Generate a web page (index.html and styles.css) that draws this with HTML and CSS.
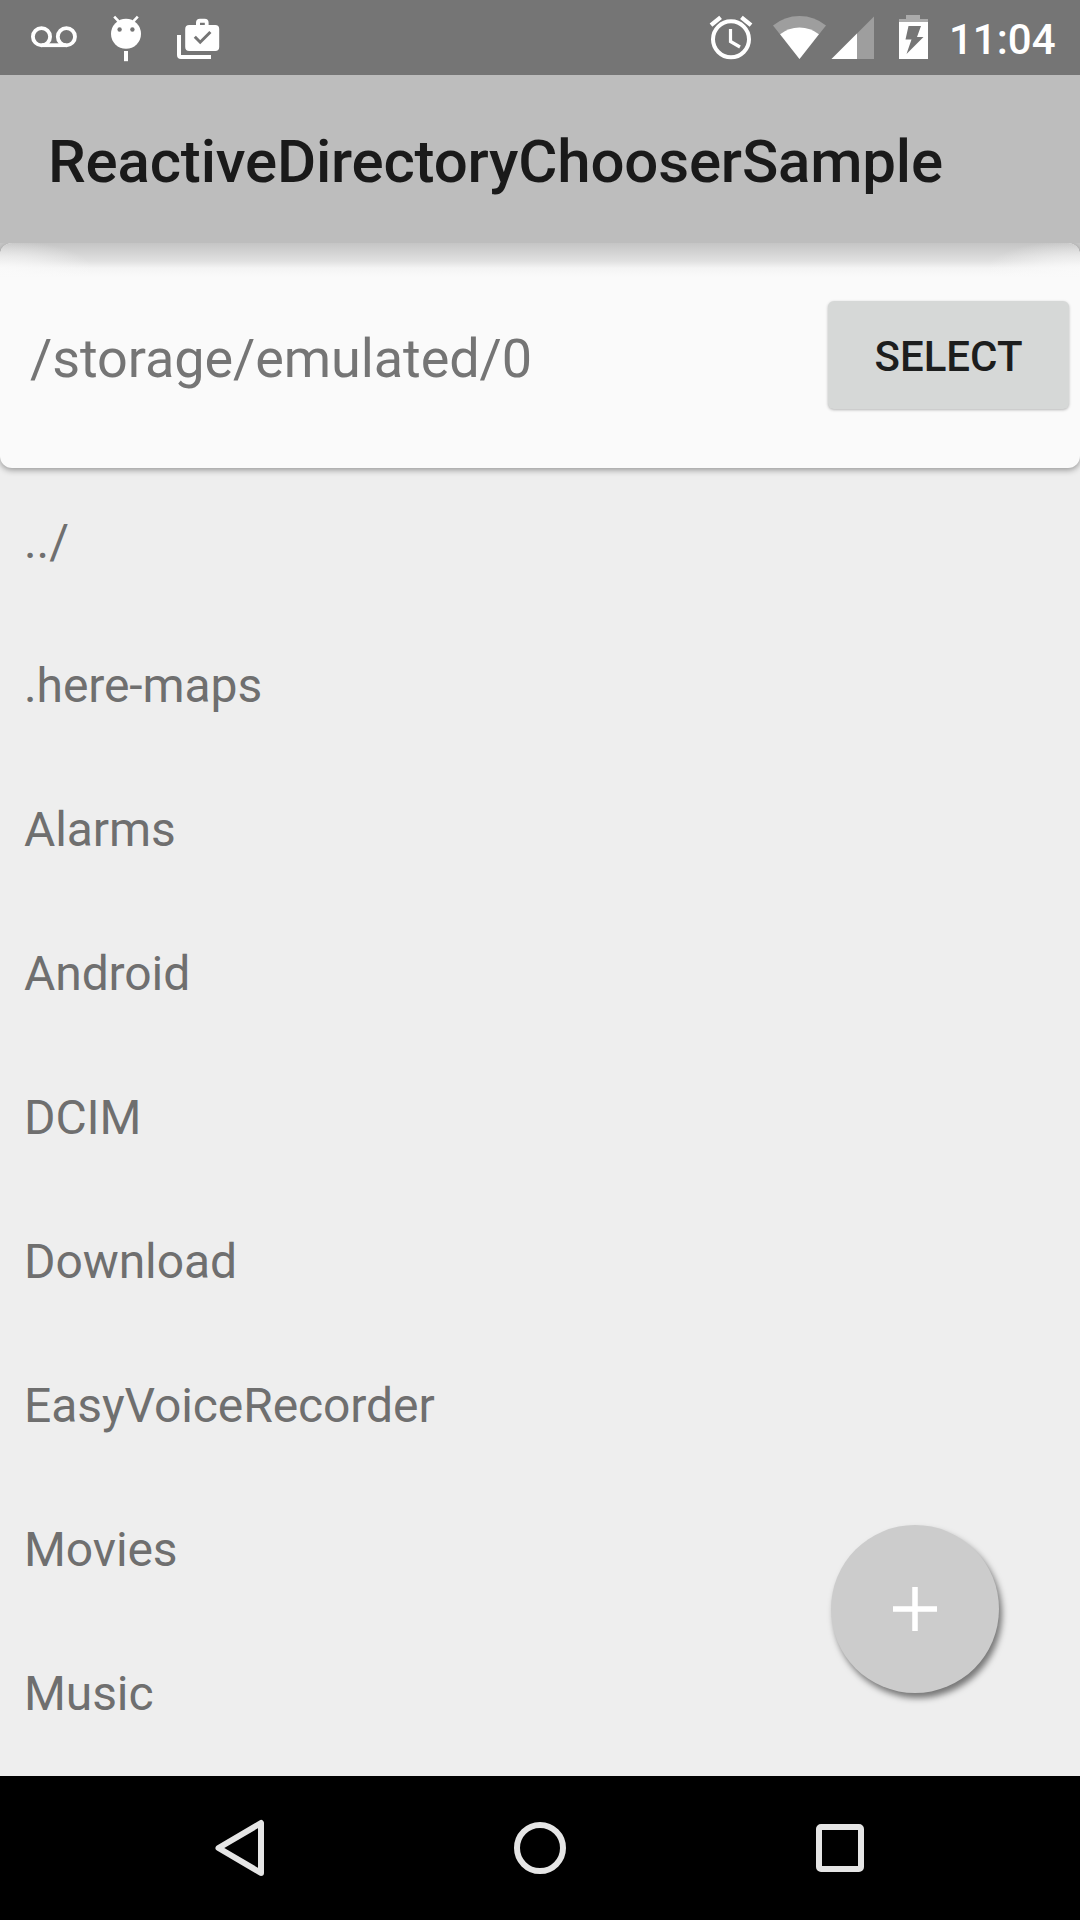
FILE: index.html
```html
<!DOCTYPE html>
<html lang="en">
<head>
<meta charset="utf-8">
<title>ReactiveDirectoryChooserSample</title>
<link rel="stylesheet" href="styles.css">
</head>
<body>
<div class="screen">
  <header class="status-bar">
    <svg class="notifications" viewBox="0 0 240 75" width="240" height="75">
      <g fill="none" stroke="#fff" stroke-width="3.8">
        <circle cx="41.5" cy="36.7" r="8.6"/>
        <circle cx="66.4" cy="36.7" r="8.6"/>
        <path d="M41.5 45.2H66.4"/>
      </g>
      <g fill="#fff">
        <circle cx="126" cy="33.8" r="15"/>
        <path d="M124 51h4v10.2h-4z"/>
        <path d="M114.2 16.6l4.5 4.8M137.8 16.6l-4.5 4.8" stroke="#fff" stroke-width="2.6"/>
      </g>
      <circle cx="119.6" cy="29.5" r="2.2" fill="#757575"/>
      <circle cx="132.4" cy="29.5" r="2.2" fill="#757575"/>
      <path fill="#fff" fill-rule="evenodd" d="M196 25v-2.200q0-4 4-4h4.600q4 0 4 4V25h6.600q4 0 4 4v18q0 4-4 4h-26q-4 0-4-4V29q0-4 4-4zM200 25h4.800v-2.200h-4.800z"/>
      <path fill="none" stroke="#757575" stroke-width="3" d="M194.800 36.800l5.400 5.400 10.200-10.200"/>
      <path fill="#fff" d="M177 35h4v20h30v4h-30q-4 0-4-4z"/>
    </svg>
    <div class="system">
      <svg viewBox="706 0 230 75" width="230" height="75">
        <circle cx="731" cy="39.300" r="18" fill="none" stroke="#fff" stroke-width="4"/>
        <path d="M730.500 29v12.500l9.500 5.500" fill="none" stroke="#fff" stroke-width="3.200"/>
        <path d="M711 25.200l9.600-7.800M751 25.200l-9.600-7.800" stroke="#fff" stroke-width="4.300"/>
        <path d="M799.500 59l-26.500-33.500Q784.500 16 799.500 16t26.500 9.500z" fill="#9e9e9e"/>
        <path d="M799.500 59l-19.400-24.700Q788.500 27.500 799.500 27.500t19.400 6.800z" fill="#fff"/>
        <path d="M831.500 59L874 16.500V59z" fill="#9e9e9e"/>
        <path d="M831.500 59L857 33.500V59z" fill="#fff"/>
        <path d="M899 22v-3h7v-4h14v4h8v3z" fill="#ababab"/>
        <path d="M899 22h29v37h-29z" fill="#fff"/>
        <path d="M908.500 26h12.500l-4 11h6.500l-17 17 5-14.500h-6z" fill="#757575"/>
      </svg>
      <span class="clock">11:04</span>
    </div>
  </header>
  <div class="app-bar"><h1 class="title">ReactiveDirectoryChooserSample</h1></div>
  <main class="content">
    <section class="path-card">
      <span class="path">/storage/emulated/0</span>
      <button class="select">SELECT</button>
    </section>
    <ul class="directories">
      <li>../</li>
      <li>.here-maps</li>
      <li>Alarms</li>
      <li>Android</li>
      <li>DCIM</li>
      <li>Download</li>
      <li>EasyVoiceRecorder</li>
      <li>Movies</li>
      <li>Music</li>
    </ul>
    <button class="fab" aria-label="New folder">
      <svg viewBox="0 0 44 44" width="44" height="44"><path d="M22 0v44M0 22h44" stroke="#fff" stroke-width="5.500"/></svg>
    </button>
  </main>
  <nav class="nav-bar">
    <svg viewBox="0 0 60 60" width="60" height="60"><path d="M8.500 30L51 5v50z"/></svg>
    <svg viewBox="0 0 60 60" width="60" height="60"><circle cx="30" cy="30" r="23"/></svg>
    <svg viewBox="0 0 60 60" width="60" height="60"><rect x="9" y="9" width="42" height="42" rx="2"/></svg>
  </nav>
</div>
</body>
</html>
```
FILE: styles.css
```css
* {
  box-sizing: border-box;
}

body {
  margin: 0;
  font-family: Roboto, sans-serif;
}

.screen {
  display: flex;
  flex-direction: column;
  width: 1080px;
  height: 1920px;
  overflow: hidden;
  background: #eee;
}

.status-bar {
  display: flex;
  flex: none;
  justify-content: space-between;
  height: 75px;
  background: #757575;
}

.status-bar svg {
  display: block;
}

.system {
  display: flex;
  width: 374px;
}

.clock {
  padding: 2px 0 0 13px;
  color: #fff;
  font-size: 42px;
  font-weight: 500;
  line-height: 75px;
}

.app-bar {
  position: relative;
  z-index: 1;
  display: flex;
  flex: none;
  align-items: center;
  height: 168px;
  padding: 5px 48px 0;
  background: #bdbdbd;
}

.title {
  margin: 0;
  color: #1a1a1a;
  font-size: 60px;
  font-weight: 500;
  letter-spacing: -0.18px;
  line-height: 70px;
}

.content {
  position: relative;
  flex: 1;
  min-height: 0;
  background: linear-gradient(#c8c8c8 12px, #eee 12px);
}

.path-card {
  position: relative;
  display: flex;
  align-items: center;
  justify-content: space-between;
  height: 225px;
  padding: 0 11px 0 30px;
  border-radius: 12px;
  background: #fafafa;
  box-shadow: 0 2px 6px rgba(0, 0, 0, 0.38);
}

/* Shadow that the app bar casts on the card */
.path-card::before {
  content: "";
  position: absolute;
  inset: 0 0 auto;
  height: 36px;
  border-radius: 12px 12px 0 0;
  background:
    radial-gradient(ellipse 95px 32px at 0 80%, rgba(250, 250, 250, 0.9), rgba(250, 250, 250, 0.5) 50%, rgba(250, 250, 250, 0)),
    radial-gradient(ellipse 95px 32px at 100% 80%, rgba(250, 250, 250, 0.9), rgba(250, 250, 250, 0.5) 50%, rgba(250, 250, 250, 0)),
    linear-gradient(#c5c5c5, #cecece 6px, #e0e0e0 18px, #f4f4f4 25px, #fafafa 34px);
}

.path {
  padding-top: 7px;
  color: #757575;
  font-size: 54px;
  letter-spacing: -0.08px;
  line-height: 64px;
}

.select {
  width: 241px;
  height: 108px;
  margin-top: -1px;
  padding: 3px 0 0;
  border: 0;
  border-radius: 6px;
  background: #d6d8d7;
  box-shadow: 0 1px 3px rgba(0, 0, 0, 0.28);
  color: #1d1e1e;
  font: 500 42px Roboto, sans-serif;
}

.directories {
  margin: 0;
  padding: 0;
  list-style: none;
}

.directories li {
  height: 144px;
  padding: 2px 24px 0;
  color: #6f6f6f;
  font-size: 48px;
  letter-spacing: -0.09px;
  line-height: 144px;
}

.fab {
  position: absolute;
  top: 1282px;
  left: 831px;
  display: grid;
  place-items: center;
  width: 168px;
  height: 168px;
  padding: 0;
  border: 0;
  border-radius: 50%;
  background: #ccc;
  box-shadow: 3px 5px 6px rgba(0, 0, 0, 0.5);
}

.nav-bar {
  display: flex;
  flex: none;
  align-items: center;
  justify-content: center;
  gap: 240px;
  height: 144px;
  background: #000;
}

.nav-bar svg {
  fill: none;
  stroke: #e5e5e5;
  stroke-width: 6;
  stroke-linejoin: round;
}
```
